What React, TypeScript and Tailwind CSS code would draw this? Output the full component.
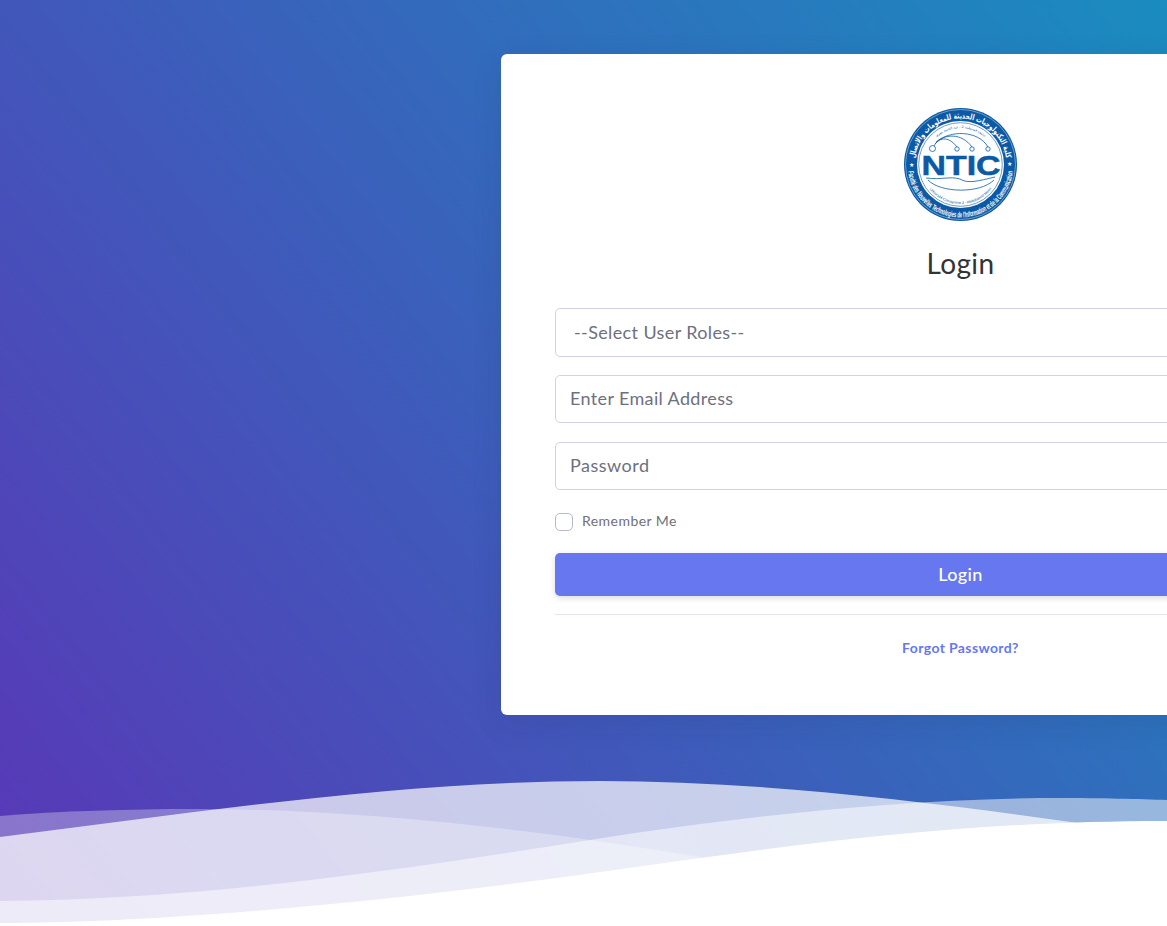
import React from 'react';

// Faculty seal, drawn by hand from the reference
const NticLogo: React.FC = () => (
  <svg width="113" height="113" viewBox="0 0 113 113" className="block">
    <defs>
      <path id="ringTop" d="M 10.5 56.5 A 46 46 0 0 1 102.5 56.5" />
      <path id="ringBottom" d="M 3.5 56.5 A 53 53 0 0 0 109.5 56.5" />
      <path id="innerTop" d="M 20 56.5 A 36.5 36.5 0 0 1 93 56.5" />
      <path id="innerBottom" d="M 17 56.5 A 39.5 39.5 0 0 0 96 56.5" />
    </defs>
    <circle cx="56.5" cy="56.5" r="56.5" fill="#0c5aa6" />
    <circle cx="56.5" cy="56.5" r="55" fill="none" stroke="#ffffff" strokeWidth="0.4" />
    <circle cx="56.5" cy="56.5" r="43.5" fill="#ffffff" />
    <circle cx="56.5" cy="56.5" r="41.8" fill="none" stroke="#0c5aa6" strokeWidth="0.6" />
    <text fontSize="8" fontWeight="700" fill="#ffffff" fontFamily="'DejaVu Sans', sans-serif" direction="rtl">
      <textPath href="#ringTop" startOffset="50%" textAnchor="middle" textLength="132" lengthAdjust="spacingAndGlyphs">
        كلية التكنولوجيات الحديثة للمعلومات والاتصال
      </textPath>
    </text>
    <text fontSize="8" fill="#ffffff" fontWeight="700" fontFamily="'Liberation Sans', sans-serif">
      <textPath href="#ringBottom" startOffset="50%" textAnchor="middle" textLength="152" lengthAdjust="spacingAndGlyphs">
        Faculté des Nouvelles Technologies de l'Information et de la Communication
      </textPath>
    </text>
    <text x="7.5" y="59" fontSize="6" fill="#ffffff" textAnchor="middle">★</text>
    <text x="105.5" y="58" fontSize="6" fill="#ffffff" textAnchor="middle">★</text>
    <text fontSize="3.4" fill="#0c5aa6" fontFamily="'DejaVu Sans', sans-serif" direction="rtl">
      <textPath href="#innerTop" startOffset="50%" textAnchor="middle">جامعة قسنطينة 2 - عبد الحميد مهري</textPath>
    </text>
    <text fontSize="3.6" fill="#0c5aa6" fontFamily="'Liberation Sans', sans-serif">
      <textPath href="#innerBottom" startOffset="50%" textAnchor="middle">Université Constantine 2 - Abdelhamid Mehri</textPath>
    </text>
    <g fill="none" stroke="#0c5aa6" strokeWidth="0.8">
      <path d="M30 38 C 34 30, 44 27, 53 39" />
      <path d="M31 36 C 40 25, 58 25, 68 39" />
      <path d="M32 34 C 46 22, 74 22, 84 39" />
      <circle cx="28.5" cy="40.5" r="3" fill="#ffffff" />
      <circle cx="53" cy="41" r="2.2" fill="#ffffff" />
      <circle cx="68" cy="41" r="2.2" fill="#ffffff" />
      <circle cx="84" cy="41" r="2.2" fill="#ffffff" />
      <path d="M22 70 C 38 72, 46 68, 56 71 C 64 76, 74 73, 91 69" />
      <path d="M24 72 C 36 85, 76 86, 90 72" />
    </g>
    <text
      x="57"
      y="67"
      fontSize="27"
      fontWeight="700"
      fill="#0c5aa6"
      stroke="#0c5aa6"
      strokeWidth="0.5"
      textAnchor="middle"
      textLength="79"
      lengthAdjust="spacingAndGlyphs"
      fontFamily="'Liberation Sans', sans-serif"
    >
      NTIC
    </text>
  </svg>
);

// Overlapping translucent waves at the bottom of the page
const Waves: React.FC = () => (
  <svg className="absolute left-0 top-0" width="1167" height="926" viewBox="0 0 1167 926">
    <path d="M0 816 C 60 811, 130 809, 195 809 C 350 809, 530 828, 700 857 V926 H0 Z" fill="#ffffff" fillOpacity="0.3" />
    <path d="M0 837 C 200 812, 400 781, 600 781 C 760 781, 930 802, 1085 824 V926 H0 Z" fill="#ffffff" fillOpacity="0.71" />
    <path d="M0 901 C 200 900, 400 870, 590 840 C 730 818, 900 798, 1060 798 C 1100 798, 1140 799, 1167 800 V926 H0 Z" fill="#ffffff" fillOpacity="0.5" />
    <path d="M0 923 C 170 923, 400 900, 600 872 C 780 847, 950 821, 1167 821 V926 H0 Z" fill="#ffffff" />
  </svg>
);

export default function App() {
  return (
    <div className="relative h-[926px] w-[1167px] overflow-hidden bg-[linear-gradient(52deg,#5a36b7,#1a8cbf)] font-['Lato',sans-serif]">
      <Waves />
      <div className="relative flex pl-[501px] pt-[54px]">
        <div className="h-[661px] w-[919px] shrink-0 rounded-[6px] bg-white px-[54px] pt-[54px] shadow-[0_8px_30px_rgba(30,30,80,0.12)]">
          <div className="flex justify-center">
            <NticLogo />
          </div>
          <h1 className="mt-[22px] text-center text-[28px] leading-[40px] font-normal tracking-[0.4px] text-[#333]">Login</h1>

          <form className="mt-[25px] flex flex-col">
            <select className="h-[49px] w-full appearance-none rounded-[5px] border border-[#d1d3e2] bg-white pl-[18px] text-[18px] tracking-[0.38px] text-[#6e707e]">
              <option>--Select User Roles--</option>
            </select>
            <input
              className="mt-[18px] h-[48px] w-full rounded-[5px] border border-[#d1d3e2] px-[14px] pb-[2px] text-[18px] tracking-[0.36px] placeholder:text-[#6e707e]"
              placeholder="Enter Email Address"
            />
            <input
              className="mt-[19px] h-[48px] w-full rounded-[5px] border border-[#d1d3e2] px-[14px] pb-[2px] text-[18px] tracking-[0.5px] placeholder:text-[#6e707e]"
              placeholder="Password"
            />
            <label className="mt-[23px] flex h-[18px] items-center gap-[9px] text-[14px] tracking-[0.45px] text-[#6e707e]">
              <input type="checkbox" className="h-[18px] w-[18px] appearance-none rounded-[5px] border border-[#b7b9cc] bg-white" />
              <span className="-translate-y-[2px]">Remember Me</span>
            </label>
            <button
              type="button"
              className="mt-[22px] h-[43px] w-full rounded-[5px] bg-[#6777ef] pb-[1px] text-[18px] font-medium tracking-[0.4px] text-white shadow-[0_2px_6px_rgba(0,0,0,0.15)]"
            >
              Login
            </button>
          </form>

          <hr className="mt-[18px] border-t border-[#e3e6f0]" />
          <div className="mt-[24px] text-center text-[14px] leading-[18px] font-bold tracking-[0.38px] text-[#6777ef]">Forgot Password?</div>
        </div>
      </div>
    </div>
  );
}
